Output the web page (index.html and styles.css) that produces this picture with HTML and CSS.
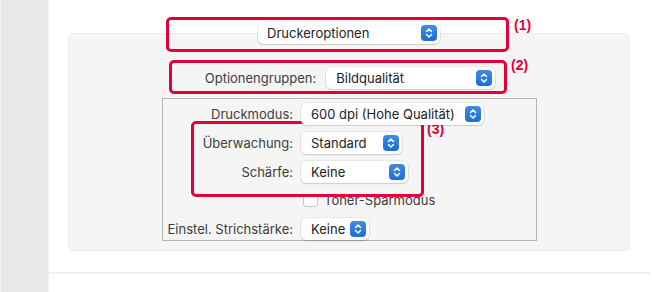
FILE: index.html
```html
<!DOCTYPE html>
<html lang="de">
<head>
  <meta charset="UTF-8">
  <title>Druckeroptionen</title>
  <link rel="stylesheet" href="styles.css">
</head>
<body>
  <div class="sidebar"></div>
  <div class="main">
    <div class="panel">
      <div class="popup popup-top">
        <span>Druckeroptionen</span>
        <span class="stepper"><svg width="8" height="12" viewBox="0 0 8 12"><path d="M1.5 4.5 L4 2 L6.5 4.5 M1.5 7.5 L4 10 L6.5 7.5" fill="none" stroke="#fff" stroke-width="1.5" stroke-linecap="round" stroke-linejoin="round"/></svg></span>
      </div>
      <div class="group-row">
        <span class="label">Optionengruppen:</span>
        <div class="popup popup-group">
          <span>Bildqualität</span>
          <span class="stepper"><svg width="8" height="12" viewBox="0 0 8 12"><path d="M1.5 4.5 L4 2 L6.5 4.5 M1.5 7.5 L4 10 L6.5 7.5" fill="none" stroke="#fff" stroke-width="1.5" stroke-linecap="round" stroke-linejoin="round"/></svg></span>
        </div>
      </div>
      <div class="options">
        <span class="label">Druckmodus:</span>
        <div class="popup w-mode">
          <span>600 dpi (Hohe Qualität)</span>
          <span class="stepper"><svg width="8" height="12" viewBox="0 0 8 12"><path d="M1.5 4.5 L4 2 L6.5 4.5 M1.5 7.5 L4 10 L6.5 7.5" fill="none" stroke="#fff" stroke-width="1.5" stroke-linecap="round" stroke-linejoin="round"/></svg></span>
        </div>
        <span class="label">Überwachung:</span>
        <div class="popup w-watch">
          <span>Standard</span>
          <span class="stepper"><svg width="8" height="12" viewBox="0 0 8 12"><path d="M1.5 4.5 L4 2 L6.5 4.5 M1.5 7.5 L4 10 L6.5 7.5" fill="none" stroke="#fff" stroke-width="1.5" stroke-linecap="round" stroke-linejoin="round"/></svg></span>
        </div>
        <span class="label">Schärfe:</span>
        <div class="popup w-sharp">
          <span>Keine</span>
          <span class="stepper"><svg width="8" height="12" viewBox="0 0 8 12"><path d="M1.5 4.5 L4 2 L6.5 4.5 M1.5 7.5 L4 10 L6.5 7.5" fill="none" stroke="#fff" stroke-width="1.5" stroke-linecap="round" stroke-linejoin="round"/></svg></span>
        </div>
        <span></span>
        <div class="check-row">
          <span class="checkbox"></span>
          <span>Toner-Sparmodus</span>
        </div>
        <span class="label">Einstel. Strichstärke:</span>
        <div class="popup w-line">
          <span>Keine</span>
          <span class="stepper"><svg width="8" height="12" viewBox="0 0 8 12"><path d="M1.5 4.5 L4 2 L6.5 4.5 M1.5 7.5 L4 10 L6.5 7.5" fill="none" stroke="#fff" stroke-width="1.5" stroke-linecap="round" stroke-linejoin="round"/></svg></span>
        </div>
      </div>
    </div>
    <div class="rule"></div>
  </div>

  <div class="mark mark-1"></div>
  <span class="tag tag-1">(1)</span>
  <div class="mark mark-2"></div>
  <span class="tag tag-2">(2)</span>
  <div class="mark mark-3"></div>
  <span class="tag tag-3">(3)</span>
</body>
</html>
```

FILE: styles.css
```css
body {
  margin: 0;
  width: 652px;
  height: 292px;
  display: flex;
  font-family: 'Inter', 'Liberation Sans', Arial, sans-serif;
  font-size: 13px;
  color: #222;
  background: #fff;
  overflow: hidden;
  position: relative;
}
.sidebar {
  width: 47px;
  background: #e8e8e6;
  border-left: 1px solid #f2f2f2;
  border-right: 1px solid #f0f0f0;
}
.main {
  flex: 1;
  padding-top: 33px;
}
.panel {
  margin-left: 19px;
  width: 560px;
  height: 216px;
  background: #f5f5f5;
  border: 1px solid #ececec;
  border-radius: 5px;
  display: flex;
  flex-direction: column;
  align-items: center;
}
.label {
  color: #3d3d3d;
  white-space: nowrap;
}
.popup {
  height: 22px;
  box-sizing: border-box;
  display: flex;
  align-items: center;
  justify-content: space-between;
  padding: 0 3px 0 10px;
  background: #fff;
  border-radius: 5px;
  box-shadow: 0 0 0 0.5px rgba(0, 0, 0, 0.12), 0 1px 1.5px rgba(0, 0, 0, 0.12);
  white-space: nowrap;
}
.stepper {
  width: 16px;
  height: 16px;
  border-radius: 4px;
  background: linear-gradient(#3d8be4, #1f6fd2);
  display: flex;
  align-items: center;
  justify-content: center;
}
.popup-top {
  width: 182px;
  margin-top: -12px;
  padding-left: 9px;
}
.group-row {
  display: flex;
  align-items: center;
  gap: 10px;
  margin-top: 23px;
  margin-left: 2px;
}
.popup-group {
  width: 169px;
}
.options {
  margin-top: 9px;
  margin-left: 1px;
  width: 375px;
  height: 143px;
  box-sizing: border-box;
  border: 1px solid #b5b5b5;
  padding: 4px 0 0 9px;
  display: grid;
  grid-template-columns: 121px auto;
  grid-template-rows: 22px 22px 22px 21px 22px;
  column-gap: 8px;
  row-gap: 7px;
  align-content: start;
  align-items: center;
  justify-items: start;
}
.options .label,
.options .popup {
  position: relative;
  z-index: 1;
}
.options .label {
  justify-self: end;
}
.w-mode {
  width: 183px;
}
.w-watch {
  width: 101px;
}
.w-sharp {
  width: 107px;
}
.w-line {
  width: 68px;
}
.check-row {
  display: flex;
  align-items: center;
  gap: 6px;
  margin-left: 2px;
  margin-top: -2px;
  color: #3d3d3d;
}
.checkbox {
  width: 13px;
  height: 13px;
  background: #fff;
  border: 1px solid #c4c4c4;
  border-radius: 3px;
}
.rule {
  margin-top: 21px;
  margin-right: 2px;
  height: 2px;
  background: #efefef;
}
.mark {
  position: absolute;
  box-sizing: border-box;
  border: 3px solid #e2003a;
  border-radius: 5px;
}
.mark-1 {
  left: 166px;
  top: 17px;
  width: 343px;
  height: 35px;
}
.mark-2 {
  left: 169px;
  top: 60px;
  width: 338px;
  height: 34px;
}
.mark-3 {
  left: 191px;
  top: 121px;
  width: 233px;
  height: 76px;
  background: #f5f5f5;
  z-index: 0;
}
.tag {
  position: absolute;
  color: #e2003a;
  font-weight: 700;
  font-size: 14px;
  line-height: 16px;
  font-family: 'Liberation Sans', Arial, sans-serif;
}
.tag-1 {
  left: 514px;
  top: 17px;
}
.tag-2 {
  left: 511px;
  top: 57px;
}
.tag-3 {
  left: 427px;
  top: 121px;
}
```
